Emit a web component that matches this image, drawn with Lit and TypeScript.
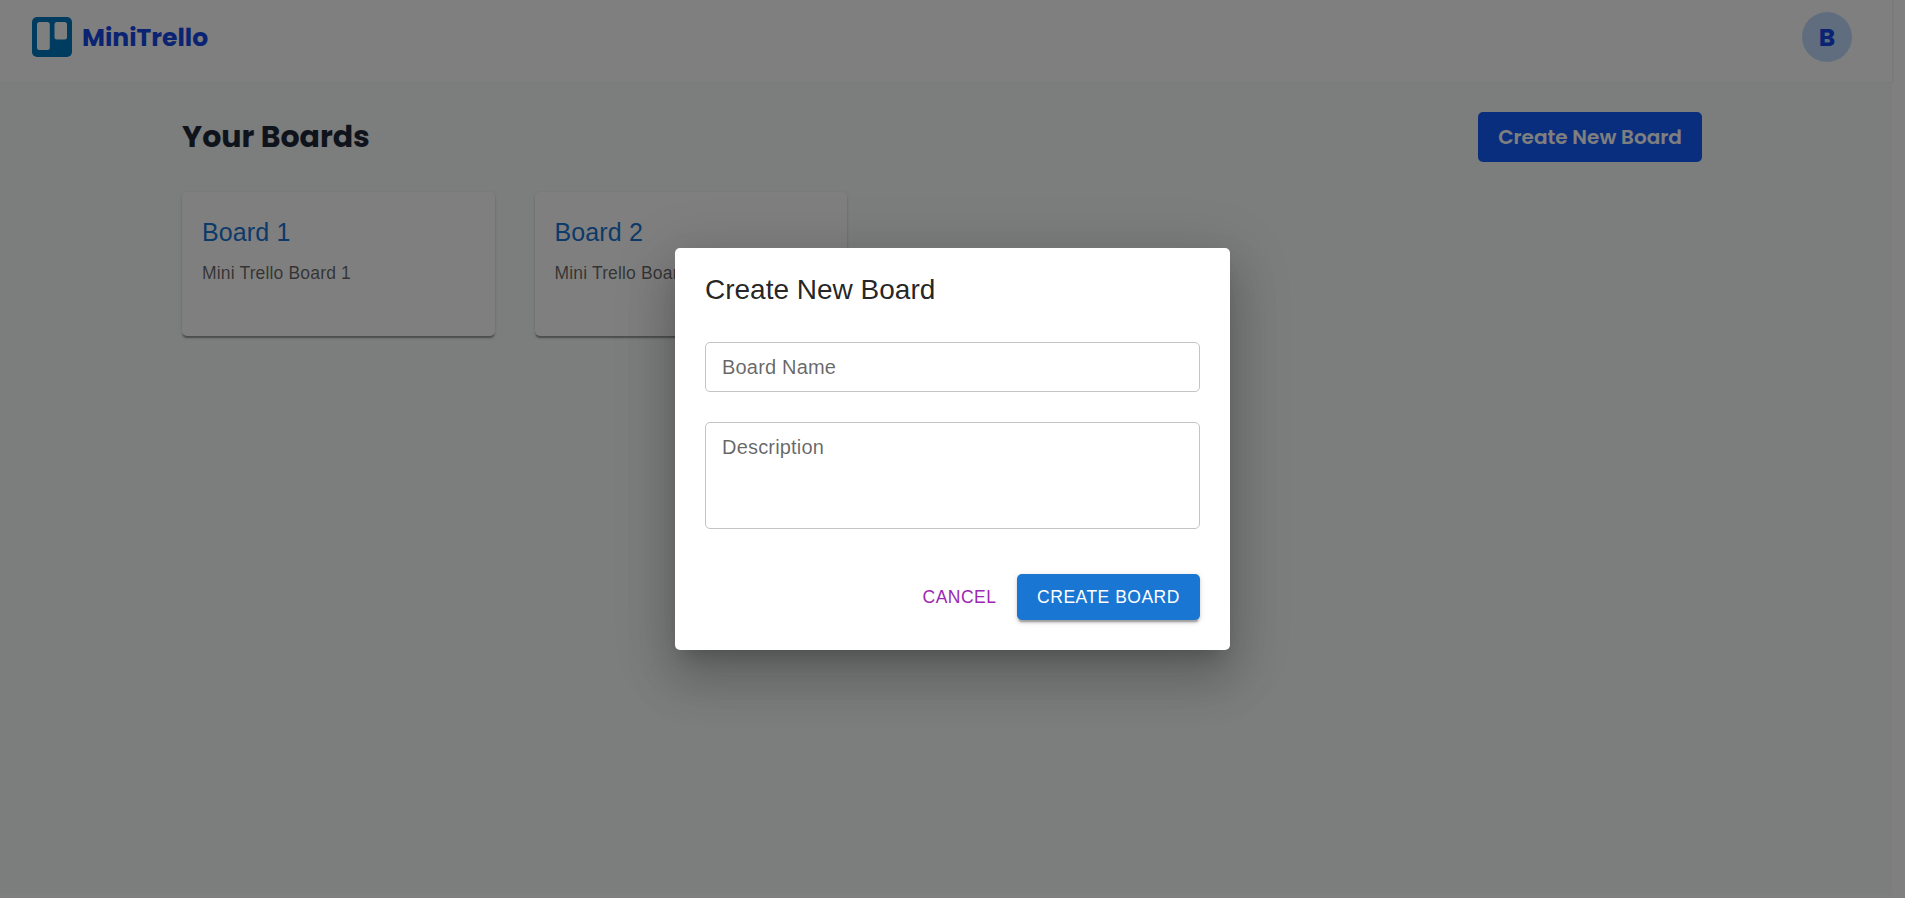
import { LitElement, html, css } from "lit";
import { customElement } from "lit/decorators.js";

@customElement("app-root")
export class AppRoot extends LitElement {
  static styles = css`
    :host { display: block; height: 898px; overflow: hidden; background: #fff; font-family: Arial, "Liberation Sans", sans-serif; }
    * { box-sizing: border-box; }
    h1, h2, h3, p { margin: 0; font-weight: 400; }
    button { border: 0; font-family: inherit; }
    .page { width: 1892px; height: 895px; background: #f8fcfa; }
    .header { height: 82px; padding: 12px 40px 20px 32px; display: flex; align-items: center; justify-content: space-between; background: #fff; box-shadow: 1px 0 2px rgba(0,0,0,.08); }
    .brand { display: flex; align-items: center; gap: 10px; }
    .logo { width: 40px; height: 40px; display: block; }
    .name { padding-top: 1px; font: 700 25px/40px Poppins, Inter, sans-serif; color: #1447e6; white-space: nowrap; }
    .avatar { width: 50px; height: 50px; border-radius: 50%; background: #bedbff; color: #1447e6; font: 700 25px/51px Poppins, Inter, sans-serif; text-align: center; }
    .main { width: 1520px; margin-left: 182px; padding-top: 30px; }
    .bar { height: 50px; display: flex; align-items: center; justify-content: space-between; }
    .title { font: 700 30px/40px Poppins, Inter, sans-serif; color: #1e2939; white-space: nowrap; }
    .new { width: 224px; height: 50px; border-radius: 5px; background: #155dfc; color: #fff; font: 600 20px/50px Poppins, Inter, sans-serif; padding: 0; white-space: nowrap; }
    .boards { display: grid; grid-template-columns: 312.5px 312.5px; gap: 40px; margin-top: 30px; }
    .card { height: 144px; padding: 20px; border-radius: 5px; background: #fff; box-shadow: 0 2.5px 1.25px -1.25px rgba(0,0,0,.2), 0 1.25px 1.25px rgba(0,0,0,.14), 0 1.25px 3.75px rgba(0,0,0,.12); }
    .card h3 { font-size: 25px; line-height: 40px; color: #1976d2; letter-spacing: .12px; }
    .card p { margin-top: 9px; font-size: 17.5px; line-height: 25px; color: rgba(0,0,0,.6); letter-spacing: .16px; }
    .overlay { position: absolute; left: 0; top: 0; width: 1905px; height: 898px; background: rgba(0,0,0,.5); display: flex; align-items: center; justify-content: center; }
    .modal { width: 555px; height: 402px; padding: 30px; border-radius: 5px; background: #fff; box-shadow: 0 13.75px 18.75px -8.75px rgba(0,0,0,.2), 0 30px 47.5px 3.75px rgba(0,0,0,.14), 0 11.25px 57.5px 10px rgba(0,0,0,.12); }
    .modal h2 { height: 24px; font-size: 28px; line-height: 24px; color: rgba(0,0,0,.87); }
    .field { height: 50px; margin-top: 40px; padding: 0 16px; border: 1px solid #c4c4c4; border-radius: 5px; font-size: 20px; line-height: 49px; color: rgba(0,0,0,.6); letter-spacing: .19px; }
    .area { height: 107px; margin-top: 30px; }
    .actions { display: flex; justify-content: flex-end; margin-top: 45px; }
    .btn { height: 46px; border-radius: 5px; font-size: 17.5px; line-height: 46px; padding: 0 20px; letter-spacing: .5px; background: none; white-space: nowrap; }
    .cancel { color: #9c27b0; width: 115px; }
    .create { width: 183px; background: #1976d2; color: #fff; font-weight: 500; box-shadow: 0 3.75px 1.25px -2.5px rgba(0,0,0,.2), 0 2.5px 2.5px rgba(0,0,0,.14), 0 1.25px 6.25px rgba(0,0,0,.12); }
  `;

  boards = [
    { name: "Board 1", text: "Mini Trello Board 1" },
    { name: "Board 2", text: "Mini Trello Board 2" },
  ];

  render() {
    return html`
      <div class="page">
        <header class="header">
          <div class="brand">
            <svg class="logo" viewBox="0 0 40 40"><rect width="40" height="40" rx="5" fill="#0079bf"/><rect x="5" y="5" width="12.8" height="28" rx="2.5" fill="#fff"/><rect x="22.500" y="5" width="12.500" height="17.500" rx="2.5" fill="#fff"/></svg>
            <h1 class="name">MiniTrello</h1>
          </div>
          <div class="avatar">B</div>
        </header>
        <main class="main">
          <div class="bar"><h2 class="title">Your Boards</h2><button class="new">Create New Board</button></div>
          <div class="boards">${this.boards.map((b) => html`<article class="card"><h3>${b.name}</h3><p>${b.text}</p></article>`)}</div>
        </main>
      </div>
      <div class="overlay">
        <section class="modal" role="dialog">
          <h2>Create New Board</h2>
          <div class="field">Board Name</div>
          <div class="field area">Description</div>
          <div class="actions"><button class="btn cancel">CANCEL</button><button class="btn create">CREATE BOARD</button></div>
        </section>
      </div>`;
  }
}
